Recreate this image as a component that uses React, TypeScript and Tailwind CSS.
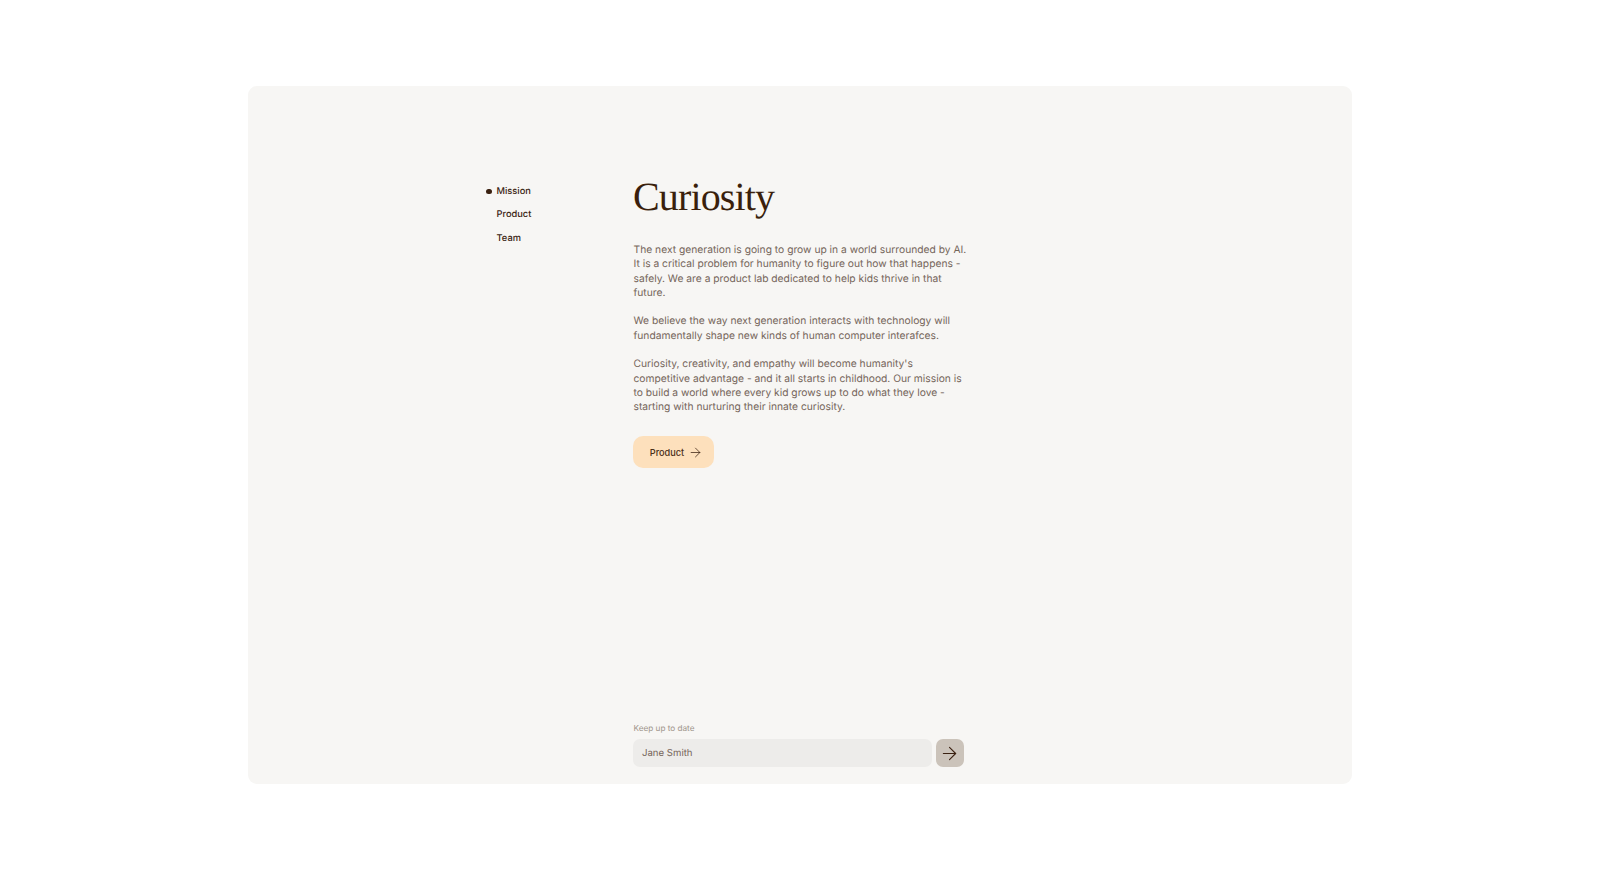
import { ArrowRight } from 'lucide-react';

const navItems = ['Mission', 'Product', 'Team'];

export default function App() {
  return (
    <div className="h-[870px] w-full bg-white pl-[248px] pt-[86px] font-['Inter',sans-serif] [text-rendering:geometricPrecision]">
      <div className="flex h-[698px] w-[1104px] rounded-[9px] bg-[#f7f6f4] pb-[17px] pl-[238px] pt-[90px]">
        <nav className="flex w-[147px] flex-col gap-[9.5px] pt-[8.5px]">
          {navItems.map((item, i) => (
            <div key={item} className="flex h-[14px] items-center text-[9.3px] font-[450] leading-[14px] text-[#3a2412]">
              <span className={`mr-[5px] h-[5.5px] w-[5.5px] rounded-full ${i === 0 ? 'bg-[#3a2010]' : 'bg-transparent'}`} />
              {item}
            </div>
          ))}
        </nav>
        <main className="flex w-[332px] flex-col">
          <h1 className="font-['Liberation_Serif',serif] text-[40px] font-normal leading-[42px] tracking-[-0.85px] text-[#3a1f0c]">
            Curiosity
          </h1>
          <div className="mt-[25px] flex flex-col gap-[14.3px] whitespace-nowrap pl-[0.5px] text-[10.27px] leading-[14.3px] text-[#75655a]">
            <p>
              The next generation is going to grow up in a world surrounded by AI.
              <br />
              It is a critical problem for humanity to figure out how that happens -
              <br />
              safely. We are a product lab dedicated to help kids thrive in that
              <br />
              future.
            </p>
            <p>
              We believe the way next generation interacts with technology will
              <br />
              fundamentally shape new kinds of human computer interafces.
            </p>
            <p>
              Curiosity, creativity, and empathy will become humanity's
              <br />
              competitive advantage - and it all starts in childhood. Our mission is
              <br />
              to build a world where every kid grows up to do what they love -
              <br />
              starting with nurturing their innate curiosity.
            </p>
          </div>
          <button
            type="button"
            className="mt-[21.5px] flex h-[32px] w-[81px] items-center justify-center gap-[4px] rounded-[10px] bg-[#fde0bc] pl-[6px] pt-[1px] text-[9.2px] font-[450] text-[#4a2f18]"
          >
            Product
            <ArrowRight size={15} strokeWidth={1.2} className="text-[#3a2010]" />
          </button>
          <div className="mt-auto">
            <label className="block pb-[1px] pl-[0.5px] text-[8.2px] leading-[12px] text-[#a0958b]">Keep up to date</label>
            <div className="mt-[4px] flex gap-[4px]">
              <div className="flex h-[28px] w-[299px] items-center rounded-[7px] bg-[#edecea] pl-[9px] pt-[2px] text-[9.6px] text-[#75655a]">
                Jane Smith
              </div>
              <button
                type="button"
                className="flex h-[28px] w-[28px] items-center justify-center rounded-[7px] bg-[#cbc3ba] pr-[1px] text-[#3a2010]"
              >
                <ArrowRight size={21} strokeWidth={1.25} />
              </button>
            </div>
          </div>
        </main>
      </div>
    </div>
  );
}
